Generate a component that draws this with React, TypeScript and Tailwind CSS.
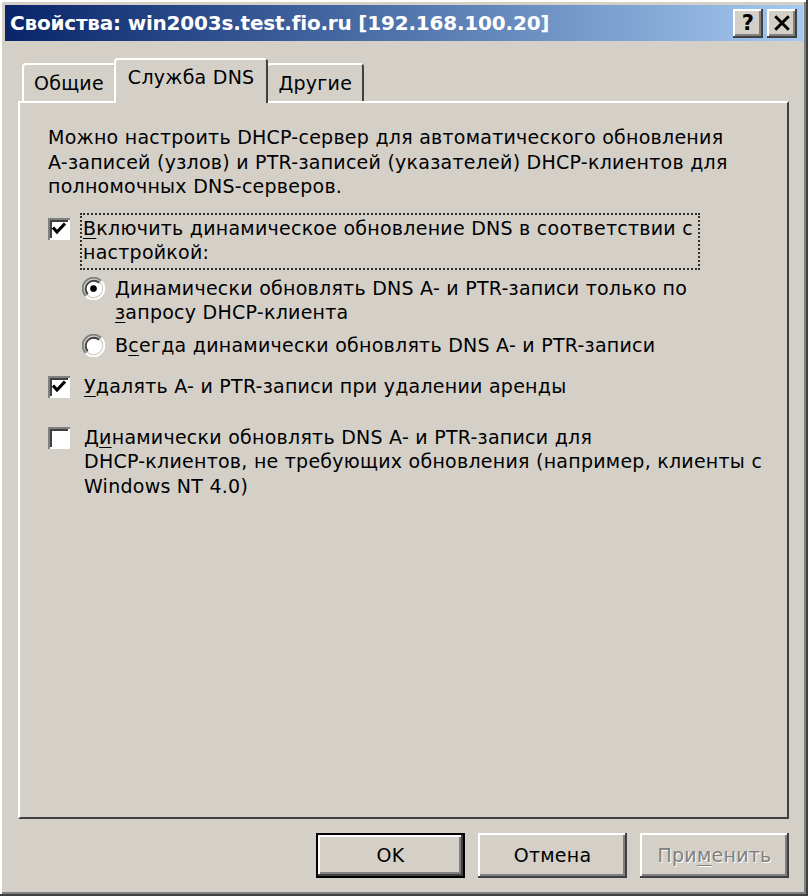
import { ReactNode } from 'react';

const raised =
  'shadow-[inset_-2px_-2px_#404040,inset_2px_2px_#ffffff,inset_-4px_-4px_#808080]';
const sunken =
  'shadow-[inset_2px_2px_#808080,inset_-2px_-2px_#ffffff,inset_4px_4px_#404040]';

function U({ children }: { children: ReactNode }) {
  return <span className="underline decoration-1 underline-offset-[3px]">{children}</span>;
}

function CheckBox({ checked }: { checked?: boolean }) {
  return (
    <div className={`relative mt-[2px] h-[22px] w-[22px] shrink-0 bg-white ${sunken}`}>
      {checked && (
        <svg viewBox="0 0 22 22" className="absolute inset-0 h-[22px] w-[22px]">
          <path d="M5 9.5 L9 14 L17 5.5" fill="none" stroke="#000" strokeWidth="3.2" />
        </svg>
      )}
    </div>
  );
}

function Radio({ checked }: { checked?: boolean }) {
  return (
    <svg viewBox="0 0 24 24" className="mt-[1px] h-[23px] w-[23px] shrink-0">
      <path d="M20 4 A11 11 0 0 0 4 20" fill="none" stroke="#808080" strokeWidth="2" />
      <path d="M4 20 A11 11 0 0 0 20 4" fill="none" stroke="#ffffff" strokeWidth="2" />
      <circle cx="12" cy="12" r="9" fill="#ffffff" />
      <path d="M18 6 A8.5 8.5 0 0 0 6 18" fill="none" stroke="#404040" strokeWidth="2" />
      {checked && <circle cx="12" cy="12" r="3.5" fill="#000" />}
    </svg>
  );
}

function Tab({ label, active }: { label: string; active?: boolean }) {
  return (
    <div
      className={`relative rounded-t-[4px] border-l-2 border-t-2 border-r-2 border-l-white border-t-white border-r-[#404040] bg-[#d4d0c8] ${
        active ? 'z-10 -mx-[2px] mb-[-2px] h-[45px] px-[12px] pt-[5px]' : 'h-[38px] px-[10px] pt-[6px]'
      }`}
    >
      {label}
    </div>
  );
}

function Button({ children, primary, disabled }: { children: ReactNode; primary?: boolean; disabled?: boolean }) {
  return (
    <div
      className={`flex h-[45px] w-[149px] items-center justify-center bg-[#d4d0c8] ${
        primary ? 'border-2 border-black' : ''
      } ${raised} ${disabled ? 'text-[#808080] [text-shadow:1px_1px_#ffffff]' : ''}`}
    >
      {children}
    </div>
  );
}

export default function App() {
  return (
    <div
      className="flex h-[896px] w-[808px] flex-col bg-[#d4d0c8] text-[19px] leading-[24.5px] tracking-[0.25px] text-black shadow-[inset_-2px_-2px_#404040,inset_2px_2px_#ffffff,inset_-4px_-4px_#808080]"
      style={{ fontFamily: '"DejaVu Sans", Tahoma, sans-serif' }}
    >
      {/* Title bar */}
      <div className="mx-[5px] mt-[5px] flex h-[36px] items-center justify-between bg-gradient-to-r from-[#0a246a] to-[#a6caf0] pl-[5px] pr-[6px]">
        <div className="text-[20px] font-bold tracking-[-0.2px] text-white">
          Свойства: win2003s.test.fio.ru [192.168.100.20]
        </div>
        <div className="flex gap-[4px]">
          <div className={`flex h-[29px] w-[30px] items-center justify-center bg-[#d4d0c8] text-[21px] font-bold ${raised}`}>
            ?
          </div>
          <div className={`flex h-[29px] w-[30px] items-center justify-center bg-[#d4d0c8] ${raised}`}>
            <svg viewBox="0 0 16 16" className="h-[18px] w-[18px]">
              <path d="M2 2 L14 14 M14 2 L2 14" stroke="#000" strokeWidth="2.6" />
            </svg>
          </div>
        </div>
      </div>

      {/* Tabs */}
      <div className="mt-[17px] flex items-end pl-[22px]">
        <Tab label="Общие" />
        <Tab label="Служба DNS" active />
        <Tab label="Другие" />
      </div>

      {/* Tab panel */}
      <div className="ml-[18px] h-[718px] w-[771px] border-2 border-l-white border-t-white border-r-[#404040] border-b-[#404040] bg-[#d4d0c8] pl-[28px] pt-[22px]">
        <p className="whitespace-nowrap">
          Можно настроить DHCP-сервер для автоматического обновления
          <br />
          A-записей (узлов) и PTR-записей (указателей) DHCP-клиентов для
          <br />
          полномочных DNS-серверов.
        </p>

        <div className="mt-[17px] flex gap-[10px]">
          <CheckBox checked />
          <div className="-mt-[3px] w-[620px] whitespace-nowrap border-2 border-dotted border-[#303030] pb-[3px] pl-[1px] pt-[1px]">
            <U>В</U>ключить динамическое обновление DNS в соответствии с
            <br />
            настройкой:
          </div>
        </div>

        <div className="mt-[6px] flex gap-[10px] pl-[34px]">
          <Radio checked />
          <div className="whitespace-nowrap">
            Динамически обновлять DNS A- и PTR-записи только по
            <br />
            <U>з</U>апросу DHCP-клиента
          </div>
        </div>

        <div className="mt-[8px] flex gap-[10px] pl-[34px]">
          <Radio />
          <div className="whitespace-nowrap">
            В<U>с</U>егда динамически обновлять DNS A- и PTR-записи
          </div>
        </div>

        <div className="mt-[17px] flex gap-[14px]">
          <CheckBox checked />
          <div className="whitespace-nowrap">
            <U>У</U>далять A- и PTR-записи при удалении аренды
          </div>
        </div>

        <div className="mt-[26px] flex gap-[14px]">
          <CheckBox />
          <div className="whitespace-nowrap">
            Д<U>и</U>намически обновлять DNS A- и PTR-записи для
            <br />
            DHCP-клиентов, не требующих обновления (например, клиенты с
            <br />
            Windows NT 4.0)
          </div>
        </div>
      </div>

      {/* Buttons */}
      <div className="mt-[14px] flex justify-end gap-[13px] pr-[19px]">
        <Button primary>OK</Button>
        <Button>Отмена</Button>
        <Button disabled>
          При<U>м</U>енить
        </Button>
      </div>
    </div>
  );
}
